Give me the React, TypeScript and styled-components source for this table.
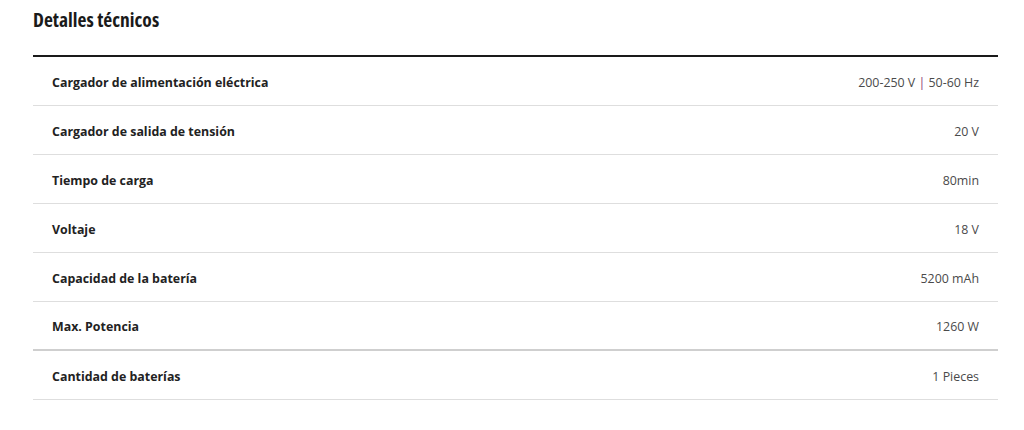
import styled, { createGlobalStyle } from "styled-components";

const GlobalStyle = createGlobalStyle`
  html, body {
    margin: 0;
    padding: 0;
    background: #ffffff;
    font-family: "Open Sans", "Liberation Sans", sans-serif;
  }
`;

const Section = styled.section`
  padding: 6px 26px 0 33px;
`;

const Title = styled.h2`
  margin: 0;
  height: 49px;
  font-family: "Open Sans", "Liberation Sans", sans-serif;
  font-stretch: 75%;
  font-size: 19.5px;
  font-weight: 700;
  line-height: 28px;
  color: #1a1a1a;
`;

const Table = styled.div`
  border-top: 2px solid #1a1a1a;
`;

const Row = styled.div<{ strong?: boolean }>`
  box-sizing: border-box;
  display: flex;
  align-items: center;
  justify-content: space-between;
  height: 49px;
  padding: 2px 19px 0;
  border-bottom: ${(props) => (props.strong ? "2px solid #cfcfcf" : "1px solid #dedede")};
  font-size: 12.4px;
`;

const Label = styled.span`
  font-weight: 700;
  color: #222222;
`;

const Value = styled.span`
  color: #4a4a4a;
`;

const Sep = styled.span`
  color: #8a3a78;
`;

const specs: { label: string; value: React.ReactNode; strong?: boolean }[] = [
  {
    label: "Cargador de alimentación eléctrica",
    value: (
      <>
        200-250 V <Sep>|</Sep> 50-60 Hz
      </>
    ),
  },
  { label: "Cargador de salida de tensión", value: "20 V" },
  { label: "Tiempo de carga", value: "80min" },
  { label: "Voltaje", value: "18 V" },
  { label: "Capacidad de la batería", value: "5200 mAh" },
  { label: "Max. Potencia", value: "1260 W", strong: true },
  { label: "Cantidad de baterías", value: "1 Pieces" },
];

export default function App() {
  return (
    <>
      <GlobalStyle />
      <Section>
        <Title>Detalles técnicos</Title>
        <Table>
          {specs.map((spec) => (
            <Row key={spec.label} strong={spec.strong}>
              <Label>{spec.label}</Label>
              <Value>{spec.value}</Value>
            </Row>
          ))}
        </Table>
      </Section>
    </>
  );
}
